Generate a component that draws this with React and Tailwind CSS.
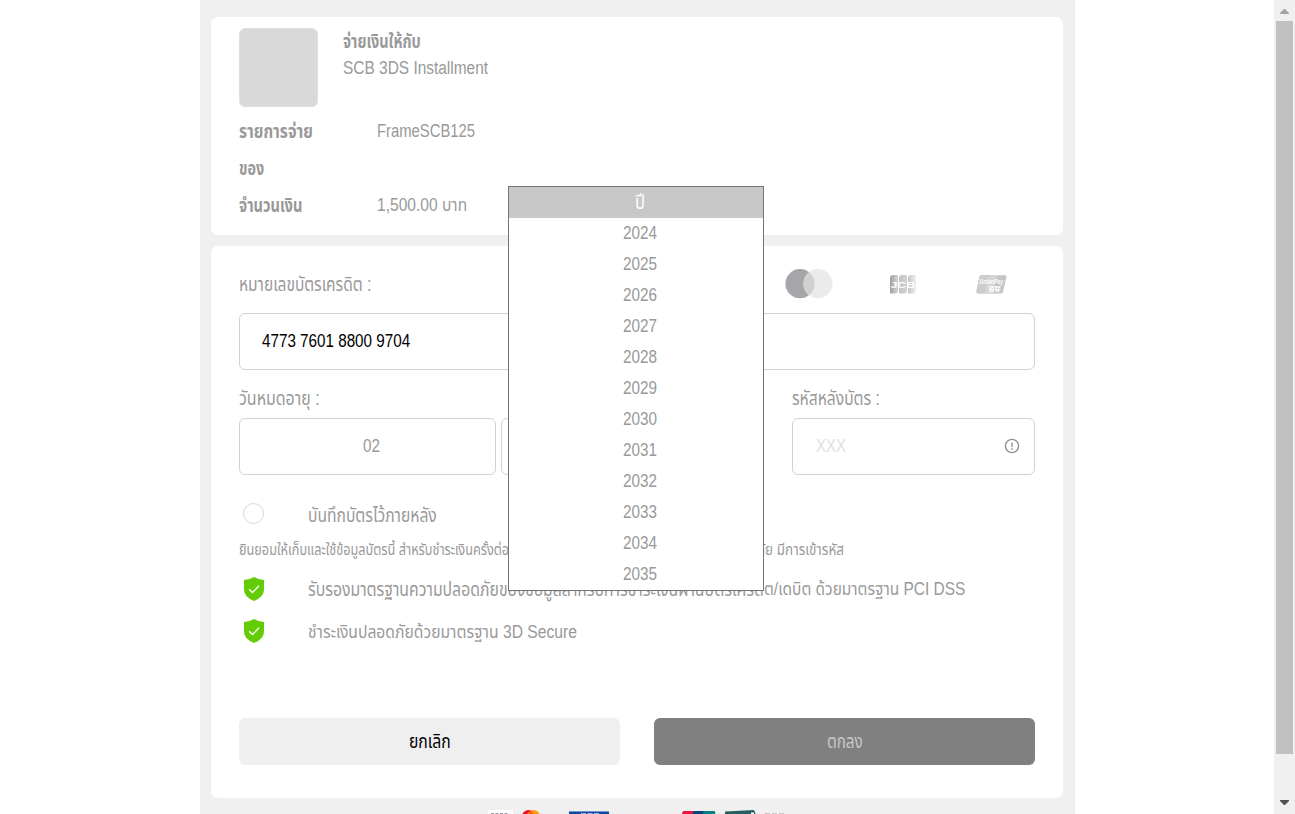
import { useLayoutEffect, useRef, useState } from "react";

// One line of condensed text, scaled horizontally to a given width.
function Line({ w, children, className = "" }) {
  const ref = useRef(null);
  const [scale, setScale] = useState(1);
  useLayoutEffect(() => {
    const fit = () => ref.current && setScale(w / ref.current.offsetWidth);
    fit();
    document.fonts.ready.then(fit);
  }, [w]);
  return (
    <span className="block shrink-0 whitespace-nowrap" style={{ width: w }}>
      <span ref={ref} className={`inline-block origin-left align-top ${className}`} style={{ transform: `scaleX(${scale})` }}>
        {children}
      </span>
    </span>
  );
}

const years = ["2024", "2025", "2026", "2027", "2028", "2029", "2030", "2031", "2032", "2033", "2034", "2035"];

function Mastercard() {
  return (
    <svg width="48" height="30" viewBox="0 0 48 30">
      <circle cx="15" cy="14.700" r="14.600" fill="#a5a6aa" />
      <circle cx="33" cy="14.700" r="14.600" fill="#ebebeb" />
      <path d="M24 3.200a14.600 14.600 0 0 1 0 23a14.600 14.600 0 0 1 0-23z" fill="#d0d0d1" />
    </svg>
  );
}

function Jcb() {
  return (
    <svg width="26" height="19" viewBox="0 0 26 19">
      <defs>
        <linearGradient id="j1"><stop stopColor="#a49fa0" /><stop offset="1" stopColor="#d5d5d5" /></linearGradient>
        <linearGradient id="j2"><stop stopColor="#c3c3c3" /><stop offset="1" stopColor="#d2d2d2" /></linearGradient>
        <linearGradient id="j3"><stop stopColor="#c4c4c4" /><stop offset="1" stopColor="#efefef" /></linearGradient>
      </defs>
      <path d="M3 0H8V15Q8 18.500 5 18.500H0V3Q0 0 3 0z" fill="url(#j1)" />
      <path d="M12 0H17V15Q17 18.500 14 18.500H9V3Q9 0 12 0z" fill="url(#j2)" />
      <path d="M21 0H26V15Q26 18.500 23 18.500H18V3Q18 0 21 0z" fill="url(#j3)" />
      <text x="0.500" y="12.500" textLength="24.500" lengthAdjust="spacingAndGlyphs" fontSize="9.500" fontWeight="700" fontFamily="Liberation Sans" fill="#fff">JCB</text>
    </svg>
  );
}

function UnionPay() {
  return (
    <svg width="31" height="19" viewBox="0 0 31 19">
      <path d="M5 .3H29Q31 .3 30.500 2L27 17Q26.500 18.500 25 18.500H2Q0 18.500.4 16.500L3.500 1.500Q4 .3 5 .3z" fill="#c5c5c5" />
      <path d="M5 .3H13L8.500 18.500H2Q0 18.500.4 16.500L3.500 1.500Q4 .3 5 .3z" fill="#cdcdcd" />
      <path d="M12.500.3H21L17 18.500H8.500z" fill="#d5d5d5" />
      <text x="3.500" y="9.300" textLength="23.500" lengthAdjust="spacingAndGlyphs" fontSize="6.500" fontWeight="700" fontStyle="italic" fontFamily="Liberation Sans" fill="#fff">UnionPay</text>
      <text x="12.500" y="15.500" fontSize="6" fontWeight="700" fontFamily="Noto Sans CJK SC" fill="#fff">银联</text>
    </svg>
  );
}

function Shield() {
  return (
    <svg width="20" height="24" viewBox="0 0 20 24">
      <path d="M10 0Q14.500 2.700 20 3V12.500Q20 20 10 24Q0 20 0 12.500V3Q5.500 2.700 10 0z" fill="#63cc06" />
      <path d="M5.200 12.200L8.500 15.500L15 8.800" fill="none" stroke="#fff" strokeWidth="1.300" />
    </svg>
  );
}

function FooterLogos() {
  return (
    <svg width="300" height="5" viewBox="0 0 300 5">
      <path d="M1 0H26V5H1z" fill="#fff" />
      <path d="M4 3.500H21" stroke="#9c9caf" strokeWidth="1.200" strokeDasharray="3 1.500" />
      <circle cx="41.500" cy="6.500" r="6.500" fill="#eb1024" />
      <circle cx="46.500" cy="6.500" r="6.500" fill="#f79e1b" />
      <path d="M44 .8Q40.500 4 41 5H47Q47.500 4 44 .8z" fill="#ff5f00" />
      <path d="M82 1H122V5H82z" fill="#1047a0" />
      <path d="M82 1H122V2H82z" fill="#6f97c9" />
      <path d="M94 4H112" stroke="#d5e0ef" strokeWidth="1.500" strokeDasharray="5 1.500" />
      <path d="M197 1H207V5H195Q195 1 197 1z" fill="#e5173f" />
      <path d="M207 1H217V5H205z" fill="#04457d" />
      <path d="M217 1H227Q229 1 228 5H215z" fill="#087e85" />
      <path d="M238 1.500L267 0L269 5H238z" fill="#275e61" />
      <path d="M264 2.500H267V5H264z" fill="#fff" />
      <path d="M278 4H299" stroke="#b2b7b5" strokeWidth="1.500" strokeDasharray="5 2" />
    </svg>
  );
}

function Field({ className = "", children }) {
  return <div className={`flex h-[57px] shrink-0 items-center rounded-[6px] border border-[#cfd2da] bg-white ${className}`}>{children}</div>;
}

export default function App() {
  return (
    <div className="relative flex h-[814px] w-[1295px] overflow-hidden bg-white pl-[200px] text-[18px] leading-[27px] text-[#999] [font-family:'Liberation_Sans','Noto_Sans_Thai','Noto_Sans',sans-serif]">
      <main className="flex w-[875px] shrink-0 flex-col bg-[#f0f0f0] px-[11px] pr-3 pt-[17px]">
        <section className="h-[218px] shrink-0 rounded-[7px] bg-white pl-7 pt-[11px]">
          <div className="flex gap-[25px]">
            <div className="size-[79px] rounded-[6px] border border-[#e0e0e0] bg-[#d9d9d9]" />
            <div>
              <Line w={78} className="text-[19.5px] font-bold">จ่ายเงินให้กับ</Line>
              <Line w={145}>SCB 3DS Installment</Line>
            </div>
          </div>
          <div className="grid grid-cols-[138px_1fr] pt-[6px] leading-[37px]">
            <Line w={74} className="text-[19.5px] font-bold">รายการจ่าย</Line>
            <Line w={98}>FrameSCB125</Line>
            <Line w={25} className="text-[19.5px] font-bold">ของ</Line>
            <span />
            <Line w={63} className="text-[19.5px] font-bold">จำนวนเงิน</Line>
            <Line w={90}>1,500.00 บาท</Line>
          </div>
        </section>

        <section className="mt-[11px] h-[552px] shrink-0 rounded-[7px] bg-white px-7 pt-[19px]">
          <div className="flex h-12 items-start justify-between">
            <div className="pt-[6px]"><Line w={132} className="text-[19.5px]">หมายเลขบัตรเครดิต :</Line></div>
            <div className="flex h-[38px] items-center pr-[28px]">
              <Mastercard />
              <div className="pl-[57px]"><Jcb /></div>
              <div className="pl-[60px]"><UnionPay /></div>
            </div>
          </div>
          <Field className="px-[22px] text-black"><Line w={148}>4773 7601 8800 9704</Line></Field>
          <div className="flex justify-between pt-[15px]">
            <div>
              <div className="h-[33px]"><Line w={81} className="text-[19.5px]">วันหมดอายุ :</Line></div>
              <div className="flex gap-[5px]">
                <Field className="w-[257px] justify-center pl-2"><Line w={17}>02</Line></Field>
                <Field className="w-[257px]" />
              </div>
            </div>
            <div className="w-[243px]">
              <div className="h-[33px]"><Line w={88} className="text-[19.5px]">รหัสหลังบัตร :</Line></div>
              <Field className="justify-between pl-[23px] pr-[14px] text-[#dfe1e6]">
                <Line w={30}>XXX</Line>
                <svg width="16" height="16" viewBox="0 0 16 16" fill="none" stroke="#929292" strokeWidth="1.400" className="mb-[2px]">
                  <circle cx="8" cy="8" r="6.600" />
                  <path d="M8 4.500V9M8 10.300V12" />
                </svg>
              </Field>
            </div>
          </div>
          <div className="flex pl-1 pt-[27px]">
            <div className="mt-px size-[21px] rounded-full border border-[#d6d7dd]" />
            <div className="ml-11"><Line w={129} className="text-[19.5px]">บันทึกบัตรไว้ภายหลัง</Line></div>
          </div>
          <div className="flex h-7 pt-[7px] text-[15px]">
            <Line w={270}>ยินยอมให้เก็บและใช้ข้อมูลบัตรนี้ สำหรับชำระเงินครั้งต่อ</Line>
            <Line w={248}>ไป ข้อมูลของท่านจะถูกเก็บรักษาไว้อย่างปลอด</Line>
            <Line w={87}>ภัย มีการเข้ารหัส</Line>
          </div>
          <div className="flex h-[47px] items-start pl-[5px] pt-[20px]">
            <Shield />
            <div className="-mt-px ml-11 flex">
              <Line w={191} className="text-[19.5px]">รับรองมาตรฐานความปลอดภัย</Line>
              <Line w={265} className="text-[19.5px]">ของข้อมูลสำหรับการชำระเงินผ่านบัตรเครดิ</Line>
              <Line w={201}>ต/เดบิต ด้วยมาตรฐาน PCI DSS</Line>
            </div>
          </div>
          <div className="flex items-start pl-[5px] pt-[15px]">
            <Shield />
            <div className="ml-11"><Line w={269}>ชำระเงินปลอดภัยด้วยมาตรฐาน 3D Secure</Line></div>
          </div>
          <div className="flex gap-[34px] pt-[72px]">
            <button className="flex h-[47px] w-[381px] items-center justify-center rounded-[6px] bg-[#efefef] text-[19.5px] text-black"><Line w={42}>ยกเลิก</Line></button>
            <button className="flex h-[47px] w-[381px] items-center justify-center rounded-[6px] bg-[#808080] text-[19.5px] text-[#c8c8c8]"><Line w={36}>ตกลง</Line></button>
          </div>
        </section>
        <footer className="ml-[276px] mt-3 h-1 shrink-0"><FooterLogos /></footer>
      </main>

      <div className="ml-auto flex w-[21px] shrink-0 flex-col items-center bg-[#f0f0f0]">
        <svg width="9" height="21" className="shrink-0"><path d="M0 14V13L4 9H5L9 13V14z" fill="#a3a3a3" /></svg>
        <div className="h-[733px] w-[17px] shrink-0 bg-[#c1c1c1]" />
        <svg width="9" height="60" className="shrink-0"><path d="M0 46V47L4 51H5L9 47V46z" fill="#505050" /></svg>
      </div>

      <ul className="absolute left-[508px] top-[186px] w-64 border border-[#767676] bg-white leading-[31px]">
        <li className="flex h-[31px] justify-center bg-[#c8c8c8] pl-[7px] text-[20px] text-white"><Line w={10}>ปี</Line></li>
        {years.map((y) => (
          <li key={y} className="flex h-[31px] justify-center pl-[7px]"><Line w={34}>{y}</Line></li>
        ))}
      </ul>
    </div>
  );
}
